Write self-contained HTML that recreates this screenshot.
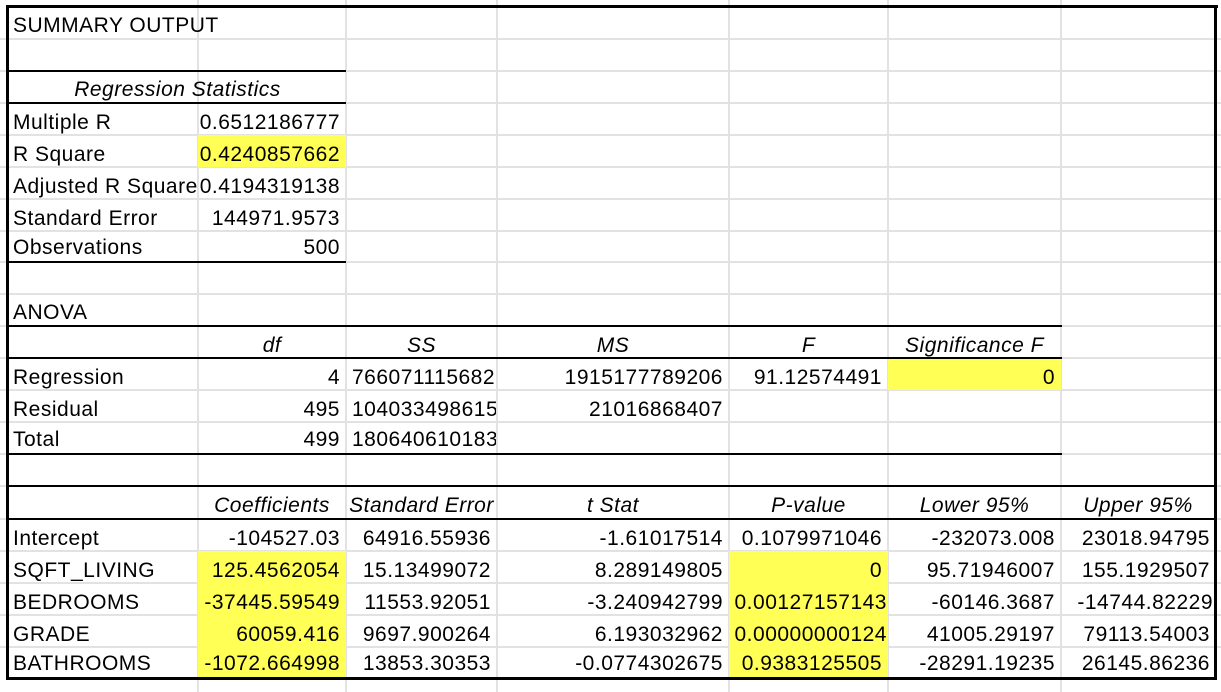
<!DOCTYPE html>
<html><head><meta charset="utf-8"><style>
body{margin:0;width:1221px;height:692px;overflow:hidden;background:#fff;position:relative;font-family:"Liberation Sans",Arial,sans-serif;font-size:21px;letter-spacing:0.5px;color:#000}
.v{position:absolute;top:0;height:692px;width:2px;background:#e2e2e2}
.h{position:absolute;left:0;width:1221px;height:2px;background:#e2e2e2}
.k{position:absolute;background:#000}
.y{position:absolute;background:#ffff55}
.t{position:absolute;line-height:22px;white-space:nowrap;overflow:hidden}
.r{text-align:right}.c{text-align:center;font-style:italic}
</style></head><body>
<div class="v" style="left:197px"></div><div class="v" style="left:345px"></div><div class="v" style="left:496px"></div><div class="v" style="left:728px"></div><div class="v" style="left:887px"></div><div class="v" style="left:1060px"></div>
<div class="h" style="top:38px"></div><div class="h" style="top:70px"></div><div class="h" style="top:102px"></div><div class="h" style="top:134px"></div><div class="h" style="top:166px"></div><div class="h" style="top:198px"></div><div class="h" style="top:230px"></div><div class="h" style="top:261px"></div><div class="h" style="top:293px"></div><div class="h" style="top:325px"></div><div class="h" style="top:357px"></div><div class="h" style="top:389px"></div><div class="h" style="top:421px"></div><div class="h" style="top:453px"></div><div class="h" style="top:485px"></div><div class="h" style="top:518px"></div><div class="h" style="top:550px"></div><div class="h" style="top:582px"></div><div class="h" style="top:614px"></div><div class="h" style="top:646px"></div>
<div class="y" style="left:198px;top:135px;width:148px;height:32px"></div>
<div class="y" style="left:888px;top:359px;width:173px;height:31px"></div>
<div class="y" style="left:198px;top:551px;width:148px;height:127px"></div>
<div class="y" style="left:729px;top:551px;width:159px;height:127px"></div>
<div class="k" style="left:6px;top:5px;width:1212px;height:3px"></div>
<div class="k" style="left:6px;top:5px;width:3px;height:675px"></div>
<div class="k" style="left:1214px;top:5px;width:3px;height:675px"></div>
<div class="k" style="left:6px;top:677px;width:1211px;height:3px"></div>
<div class="k" style="left:6px;top:70px;width:340px;height:2px"></div>
<div class="k" style="left:6px;top:102px;width:340px;height:2px"></div>
<div class="k" style="left:6px;top:261px;width:340px;height:2px"></div>
<div class="k" style="left:6px;top:325px;width:1056px;height:2px"></div>
<div class="k" style="left:6px;top:357px;width:1056px;height:2px"></div>
<div class="k" style="left:6px;top:453px;width:1056px;height:2px"></div>
<div class="k" style="left:6px;top:485px;width:1211px;height:2px"></div>
<div class="k" style="left:6px;top:518px;width:1211px;height:2px"></div>

<div class="t" style="left:13px;top:15px">SUMMARY OUTPUT</div>
<div class="t c" style="left:9px;top:79px;width:337px">Regression Statistics</div>
<div class="t" style="left:13px;top:112px">Multiple R</div><div class="t r" style="left:198px;top:112px;width:142px">0.6512186777</div>
<div class="t" style="left:13px;top:144px">R Square</div><div class="t r" style="left:198px;top:144px;width:142px">0.4240857662</div>
<div class="t" style="left:13px;top:176px;width:185px">Adjusted R Square</div><div class="t r" style="left:198px;top:176px;width:142px">0.4194319138</div>
<div class="t" style="left:13px;top:208px">Standard Error</div><div class="t r" style="left:198px;top:208px;width:142px">144971.9573</div>
<div class="t" style="left:13px;top:237px">Observations</div><div class="t r" style="left:198px;top:237px;width:142px">500</div>
<div class="t" style="left:13px;top:302px">ANOVA</div>
<div class="t c" style="left:198px;top:335px;width:148px">df</div>
<div class="t c" style="left:346px;top:335px;width:151px">SS</div>
<div class="t c" style="left:497px;top:335px;width:232px">MS</div>
<div class="t c" style="left:729px;top:335px;width:159px">F</div>
<div class="t c" style="left:888px;top:335px;width:173px">Significance F</div>
<div class="t" style="left:13px;top:367px">Regression</div><div class="t r" style="left:198px;top:367px;width:142px">4</div><div class="t" style="left:352px;top:367px;width:144px">766071115682(</div><div class="t r" style="left:497px;top:367px;width:226px">1915177789206</div><div class="t r" style="left:729px;top:367px;width:153px">91.12574491</div><div class="t r" style="left:888px;top:367px;width:167px">0</div>
<div class="t" style="left:13px;top:399px">Residual</div><div class="t r" style="left:198px;top:399px;width:142px">495</div><div class="t" style="left:352px;top:399px;width:144px">104033498615</div><div class="t r" style="left:497px;top:399px;width:226px">21016868407</div>
<div class="t" style="left:13px;top:429px">Total</div><div class="t r" style="left:198px;top:429px;width:142px">499</div><div class="t" style="left:352px;top:429px;width:144px">180640610183</div>
<div class="t c" style="left:198px;top:495px;width:148px">Coefficients</div>
<div class="t c" style="left:346px;top:495px;width:151px">Standard Error</div>
<div class="t c" style="left:497px;top:495px;width:232px">t Stat</div>
<div class="t c" style="left:729px;top:495px;width:159px">P-value</div>
<div class="t c" style="left:888px;top:495px;width:173px">Lower 95%</div>
<div class="t c" style="left:1061px;top:495px;width:154px">Upper 95%</div>

<div class="t" style="left:13px;top:528px">Intercept</div><div class="t r" style="left:198px;top:528px;width:142px">-104527.03</div><div class="t r" style="left:346px;top:528px;width:145px">64916.55936</div><div class="t r" style="left:497px;top:528px;width:226px">-1.61017514</div><div class="t r" style="left:729px;top:528px;width:153px">0.1079971046</div><div class="t r" style="left:888px;top:528px;width:167px">-232073.008</div><div class="t r" style="left:1061px;top:528px;width:149px">23018.94795</div>
<div class="t" style="left:13px;top:560px">SQFT_LIVING</div><div class="t r" style="left:198px;top:560px;width:142px">125.4562054</div><div class="t r" style="left:346px;top:560px;width:145px">15.13499072</div><div class="t r" style="left:497px;top:560px;width:226px">8.289149805</div><div class="t r" style="left:729px;top:560px;width:153px">0</div><div class="t r" style="left:888px;top:560px;width:167px">95.71946007</div><div class="t r" style="left:1061px;top:560px;width:149px">155.1929507</div>
<div class="t" style="left:13px;top:592px">BEDROOMS</div><div class="t r" style="left:198px;top:592px;width:142px">-37445.59549</div><div class="t r" style="left:346px;top:592px;width:145px">11553.92051</div><div class="t r" style="left:497px;top:592px;width:226px">-3.240942799</div><div class="t r" style="left:729px;top:592px;width:158px">0.00127157143</div><div class="t r" style="left:888px;top:592px;width:167px">-60146.3687</div><div class="t r" style="left:1061px;top:592px;width:152px">-14744.82229</div>
<div class="t" style="left:13px;top:624px">GRADE</div><div class="t r" style="left:198px;top:624px;width:142px">60059.416</div><div class="t r" style="left:346px;top:624px;width:145px">9697.900264</div><div class="t r" style="left:497px;top:624px;width:226px">6.193032962</div><div class="t r" style="left:729px;top:624px;width:158px">0.00000000124</div><div class="t r" style="left:888px;top:624px;width:167px">41005.29197</div><div class="t r" style="left:1061px;top:624px;width:149px">79113.54003</div>
<div class="t" style="left:13px;top:653px">BATHROOMS</div><div class="t r" style="left:198px;top:653px;width:142px">-1072.664998</div><div class="t r" style="left:346px;top:653px;width:145px">13853.30353</div><div class="t r" style="left:497px;top:653px;width:226px">-0.0774302675</div><div class="t r" style="left:729px;top:653px;width:153px">0.9383125505</div><div class="t r" style="left:888px;top:653px;width:167px">-28291.19235</div><div class="t r" style="left:1061px;top:653px;width:149px">26145.86236</div>
</body></html>
